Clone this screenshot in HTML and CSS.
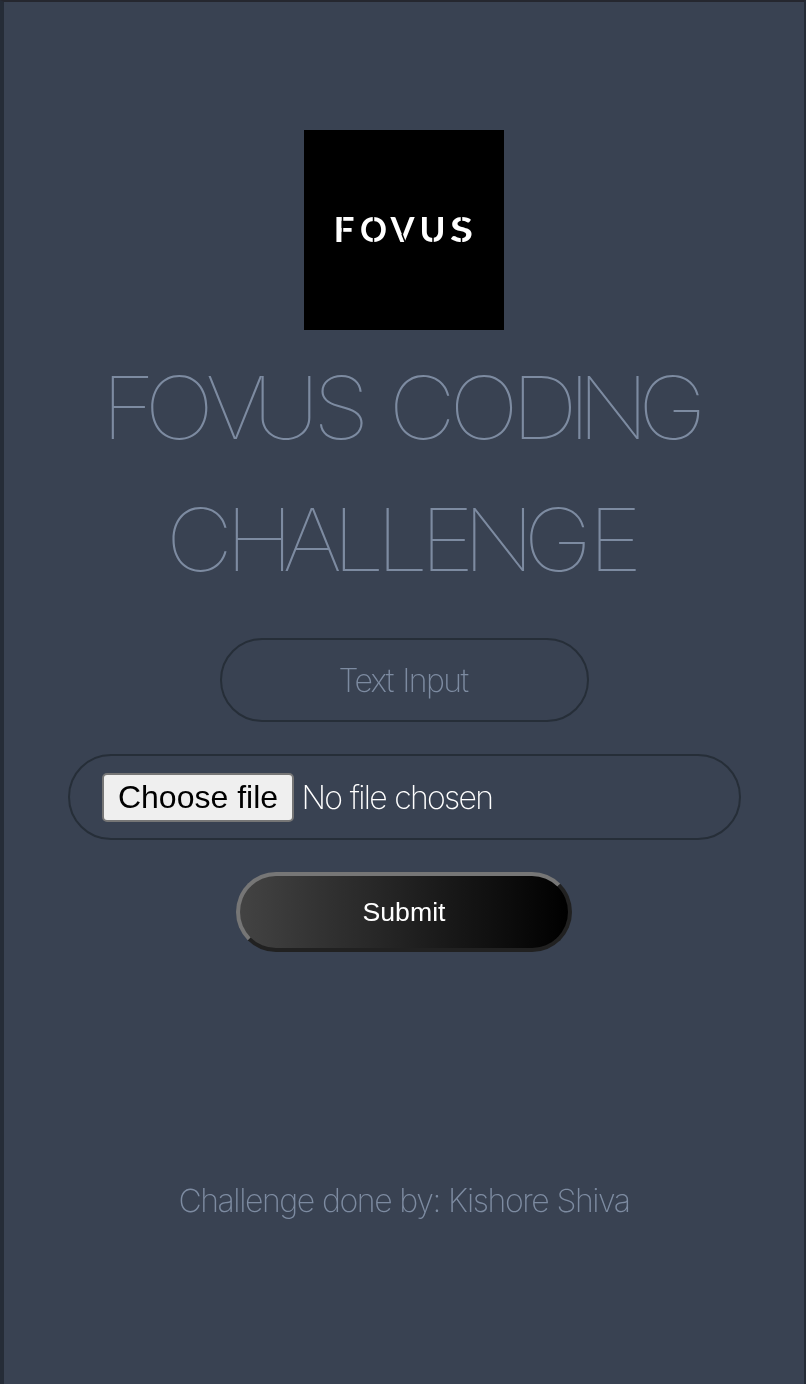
FILE: index.html
```html
<!DOCTYPE html>
<html lang="en">
<head>
<meta charset="utf-8">
<title>Fovus Coding Challenge</title>
<link rel="stylesheet" href="styles.css">
</head>
<body>
<main class="page">
  <svg class="logo" viewBox="0 0 200 200" role="img" aria-label="Fovus">
    <rect width="200" height="200" fill="#000"/>
    <g class="logo-text">
      <text x="29.5" y="112" textLength="21" lengthAdjust="spacingAndGlyphs">F</text>
      <text x="56" y="112" textLength="27" lengthAdjust="spacingAndGlyphs">O</text>
      <text x="86.500" y="112" textLength="24" lengthAdjust="spacingAndGlyphs">V</text>
      <text x="115.500" y="112" textLength="26" lengthAdjust="spacingAndGlyphs">U</text>
      <text x="146" y="112" textLength="23" lengthAdjust="spacingAndGlyphs">S</text>
    </g>
    <path class="logo-cut" d="M38.500 86v28M69.500 86v28M101.500 113l-3.500-9M129 104v11M157.500 86v10M157.500 104v11"/>
  </svg>
  <h1 class="title">
    <span class="title-line"><span class="k10">F</span><span class="k8">O</span><span class="k12">V</span><span class="k6">U</span><span class="k4">S</span> <span class="k6">C</span><span class="k7">O</span><span class="k9">D</span><span class="k13">I</span><span class="k10">N</span><span class="k0">G</span></span>
    <span class="title-line"><span class="k7">C</span><span class="k10">H</span><span class="k9">A</span><span class="k8">L</span><span class="k8">L</span><span class="k11">E</span><span class="k10">N</span><span class="k4">G</span><span class="k0">E</span></span>
  </h1>
  <form class="form">
    <div class="field text-field"><span>Text Input</span></div>
    <div class="field file-field"><span class="file-button">Choose file</span><span class="file-name">No file chosen</span></div>
    <button class="submit" type="button">Submit</button>
  </form>
  <footer class="credit"><span>Challenge done by: Kishore Shiva</span></footer>
</main>
</body>
</html>
```
FILE: styles.css
```css
* { box-sizing: border-box; }
body {
  margin: 0;
  background: #394252;
  font-family: Inter, "Liberation Sans", sans-serif;
  font-weight: 150;
}
.page {
  width: 806px;
  height: 1384px;
  border: solid #252c37;
  border-width: 2px 2px 0 4px;
  border-top-color: #25272f;
  padding-top: 128px;
  display: flex;
  flex-direction: column;
  align-items: center;
  will-change: transform;
}
.logo { display: block; width: 200px; height: 200px; }
.logo-text { font: 700 33.500px Lato, sans-serif; fill: #fff; }
.logo-cut { fill: none; stroke: #000; stroke-width: 1.500; }
.title {
  margin: 12px 0 0;
  font-size: 87px;
  font-weight: 100;
  line-height: 132px;
  color: #7d8ba1;
  white-space: nowrap;
  display: flex;
  flex-direction: column;
  align-items: center;
  transform: scaleX(1.07);
}
.title-line { letter-spacing: -3px; }
/* Optical kerning for the hairline capitals */
.k0 { letter-spacing: 0; }
.k4 { letter-spacing: -4px; }
.k6 { letter-spacing: -6.100px; }
.k7 { letter-spacing: -7.200px; }
.k8 { letter-spacing: -8px; }
.k9 { letter-spacing: -9.200px; }
.k10 { letter-spacing: -10.300px; }
.k11 { letter-spacing: -10.800px; }
.k12 { letter-spacing: -11.800px; }
.k13 { letter-spacing: -12.800px; }
.form {
  margin-top: 32px;
  display: flex;
  flex-direction: column;
  align-items: center;
}
.field {
  border: 2px solid #262e38;
  border-radius: 43px;
  display: flex;
  align-items: center;
  font-size: 32px;
  white-space: nowrap;
}
.text-field { width: 369px; height: 84px; justify-content: center; letter-spacing: -1.600px; word-spacing: 2px; color: #7d8ba1; padding-right: 2px; }
.file-field { width: 673px; height: 86px; margin-top: 32px; padding-left: 32px; gap: 8px; }
.file-button {
  width: 192px;
  height: 49px;
  border: 2px solid #767676;
  border-radius: 5px;
  background: #efefef;
  color: #000;
  font: 400 32px/45px "Liberation Sans", sans-serif;
  text-align: center;
  padding-left: 1px;
}
.file-name { color: #fff; letter-spacing: -1.700px; word-spacing: 1px; }
.submit {
  width: 336px;
  height: 80px;
  margin-top: 32px;
  padding: 0;
  border: 4px solid;
  border-color: #767676 #212121 #212121 #767676;
  border-radius: 40px;
  background: linear-gradient(to right, #434343, #000);
  color: #fff;
  font: 400 26.667px "Liberation Sans", sans-serif;
}
.credit { margin-top: 224px; font-size: 32px; line-height: 50px; letter-spacing: -1.400px; word-spacing: 0.500px; white-space: nowrap; color: #7d8ba1; }
```
